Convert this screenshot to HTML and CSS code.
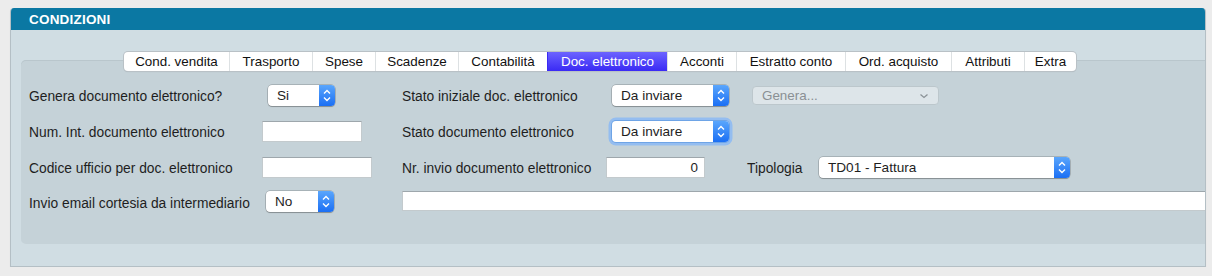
FILE: index.html
```html
<!DOCTYPE html>
<html lang="it">
<head>
    <meta charset="UTF-8">
    <title>Condizioni</title>
    <link rel="stylesheet" href="styles.css">
</head>
<body>
    <div class="window">
        <div class="title">CONDIZIONI</div>
        <div class="frame">
            <div class="tabs">
                <div class="tab">Cond. vendita</div>
                <div class="tab">Trasporto</div>
                <div class="tab">Spese</div>
                <div class="tab">Scadenze</div>
                <div class="tab">Contabilità</div>
                <div class="tab active">Doc. elettronico</div>
                <div class="tab">Acconti</div>
                <div class="tab">Estratto conto</div>
                <div class="tab">Ord. acquisto</div>
                <div class="tab">Attributi</div>
                <div class="tab">Extra</div>
            </div>

            <div class="panel">
                <div class="form">
                    <!-- row 1 -->
                    <div class="label">Genera documento elettronico?</div>
                    <div class="sel sel-si"><span>Si</span><i class="step"><svg width="16" height="21" viewBox="0 0 16 21"><path d="M5 8.5 8 5.5 11 8.5M5 12.5 8 15.5 11 12.5" fill="none" stroke="#fff" stroke-width="1.4"/></svg></i></div>
                    <div class="label">Stato iniziale doc. elettronico</div>
                    <div class="sel sel-stato"><span>Da inviare</span><i class="step"><svg width="16" height="21" viewBox="0 0 16 21"><path d="M5 8.5 8 5.5 11 8.5M5 12.5 8 15.5 11 12.5" fill="none" stroke="#fff" stroke-width="1.4"/></svg></i></div>
                    <div class="sel-off"><span>Genera...</span><svg width="10" height="6" viewBox="0 0 10 6"><path d="M1.5 1.5 5 4.5 8.5 1.5" fill="none" stroke="#8c9398" stroke-width="1.3"/></svg></div>

                    <!-- row 2 -->
                    <div class="label">Num. Int. documento elettronico</div>
                    <div class="field f-num"></div>
                    <div class="label">Stato documento elettronico</div>
                    <div class="sel sel-stato focus"><span>Da inviare</span><i class="step"><svg width="16" height="21" viewBox="0 0 16 21"><path d="M5 8.5 8 5.5 11 8.5M5 12.5 8 15.5 11 12.5" fill="none" stroke="#fff" stroke-width="1.4"/></svg></i></div>
                    <div class="filler"></div>

                    <!-- row 3 -->
                    <div class="label">Codice ufficio per doc. elettronico</div>
                    <div class="field f-cod"></div>
                    <div class="label">Nr. invio documento elettronico</div>
                    <div class="field f-nr">0</div>
                    <div class="label">Tipologia</div>
                    <div class="sel sel-tipo"><span>TD01 - Fattura</span><i class="step"><svg width="16" height="21" viewBox="0 0 16 21"><path d="M5 8.5 8 5.5 11 8.5M5 12.5 8 15.5 11 12.5" fill="none" stroke="#fff" stroke-width="1.4"/></svg></i></div>

                    <!-- row 4 -->
                    <div class="label r4">Invio email cortesia da intermediario</div>
                    <div class="sel sel-no r4"><span>No</span><i class="step"><svg width="16" height="21" viewBox="0 0 16 21"><path d="M5 8.5 8 5.5 11 8.5M5 12.5 8 15.5 11 12.5" fill="none" stroke="#fff" stroke-width="1.4"/></svg></i></div>
                    <div class="field f-long r4"></div>
                </div>
            </div>
        </div>
    </div>
</body>
</html>
```

FILE: styles.css
```css
body {
    margin: 0;
    background: #ececec;
    font-family: "Liberation Sans", Arial, sans-serif;
    font-size: 13.4px;
    color: #1e1e1e;
}
.window {
    margin: 8px 0 0 10px;
    width: 1196px;
    height: 259px;
    box-sizing: border-box;
    background: #d0dde3;
    border: 1px solid #b4bfc5;
    border-top: none;
    border-radius: 4px 4px 0 0;
    box-shadow: 0 1px 1px rgba(0, 0, 0, 0.08);
    overflow: hidden;
}
.title {
    height: 22px;
    line-height: 23px;
    background: #0b78a3;
    color: #fff;
    font-weight: bold;
    font-size: 13.5px;
    letter-spacing: 0.2px;
    padding-left: 19px;
    margin: 0 -1px;
}
.frame {
    padding: 22px 0 0 10px;
}
.tabs {
    position: relative;
    z-index: 1;
    display: flex;
    margin-left: 103px;
    width: max-content;
    height: 19px;
    background: #fff;
    border-radius: 4px;
    box-shadow: 0 0 0 1px #b9c1c6, 0 1px 1px rgba(0, 0, 0, 0.15);
    overflow: hidden;
}
.tab {
    line-height: 19px;
    text-align: center;
    box-sizing: border-box;
    border-left: 1px solid #dde1e3;
    color: #111;
    white-space: nowrap;
}
.tab:first-child {
    border-left: none;
}
.tab:nth-child(1) { width: 105px; }
.tab:nth-child(2) { width: 83px; }
.tab:nth-child(3) { width: 63px; }
.tab:nth-child(4) { width: 83px; }
.tab:nth-child(5) { width: 89px; }
.tab:nth-child(6) { width: 120px; }
.tab:nth-child(7) { width: 69px; }
.tab:nth-child(8) { width: 109px; }
.tab:nth-child(9) { width: 106px; }
.tab:nth-child(10) { width: 73px; }
.tab:nth-child(11) { width: 52px; }
.tab.active {
    background: linear-gradient(#6c63ff, #3a2af4);
    color: #fff;
    border-left-color: #3a2af4;
}
.panel {
    margin-top: -11px;
    width: 1200px;
    height: 184px;
    background: #c5d2d8;
    border-radius: 5px;
    box-shadow: inset 0 1px 0 #b9c6cc;
}
.form {
    display: grid;
    grid-template-columns: 233px 140px 204px 141px 71px 1fr;
    grid-template-rows: 21px 21px 21px 21px;
    row-gap: 15px;
    padding: 25px 0 0 8px;
}
.label {
    align-self: center;
    white-space: nowrap;
    font-size: 13.8px;
    padding-top: 1px;
}
.r4 {
    margin-top: -2px;
}
.filler {
    grid-column: 5 / span 2;
}
.sel {
    display: flex;
    align-items: center;
    height: 21px;
    box-sizing: border-box;
    background: #fff;
    border-radius: 4px;
    box-shadow: 0 0 0 0.5px rgba(0, 0, 0, 0.3), 0 1px 1px rgba(0, 0, 0, 0.2);
    overflow: hidden;
}
.sel span {
    flex: 1;
    padding-left: 9px;
    white-space: nowrap;
    font-size: 13.6px;
}
.step {
    display: block;
    width: 16px;
    height: 21px;
    background: linear-gradient(#5aa6fc, #1b6ff4);
}
.step svg {
    display: block;
}
.sel-si {
    width: 67px;
    margin-left: 6px;
}
.sel-no {
    width: 68px;
    margin-left: 4px;
}
.sel-stato {
    width: 117px;
    margin-left: 6px;
}
.sel-tipo {
    width: 251px;
    margin-left: 1px;
}
.focus {
    box-shadow: 0 0 0 1px #6ea4e6, 0 0 0 3.5px #94bdf0;
}
.sel-off {
    grid-column: 5 / span 2;
    display: flex;
    align-items: center;
    justify-content: space-between;
    margin: 1px 0 1px 5px;
    width: 187px;
    height: 19px;
    box-sizing: border-box;
    padding: 0 9px 0 9px;
    background: #dde5e9;
    border: 1px solid #bcc7cc;
    border-radius: 4px;
    color: #8a9094;
}
.field {
    height: 21px;
    box-sizing: border-box;
    background: #fff;
    border: 1px solid #c3cacd;
    border-top-color: #9ea7ac;
}
.f-num {
    width: 100px;
}
.f-cod {
    width: 110px;
}
.f-nr {
    width: 99px;
    text-align: right;
    padding-right: 6px;
    line-height: 19px;
}
.f-long {
    grid-column: 3 / span 4;
    width: 810px;
    height: 20px;
}
```
